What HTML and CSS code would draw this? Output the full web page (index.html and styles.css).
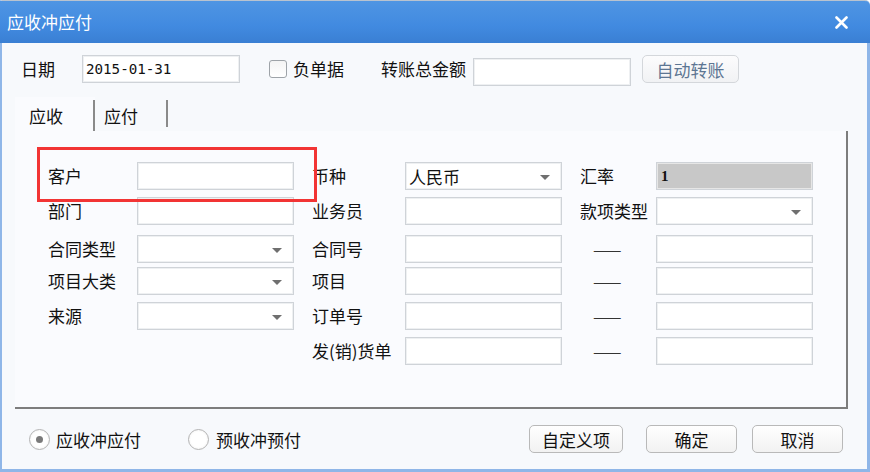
FILE: index.html
```html
<!DOCTYPE html>
<html lang="zh-CN">
<head>
    <meta charset="UTF-8">
    <title>应收冲应付</title>
    <link rel="stylesheet" href="styles.css">
</head>
<body>
    <div class="window">
        <div class="titlebar">
            <span class="title">应收冲应付</span>
            <svg class="close" width="13" height="13" viewBox="0 0 13 13">
                <path d="M1.5 1.5 L11.5 11.5 M11.5 1.5 L1.5 11.5" stroke="#fff" stroke-width="2.6" stroke-linecap="round"/>
            </svg>
        </div>

        <div class="toolbar">
            <span class="lbl date-lbl">日期</span>
            <div class="field date-field"><span class="mono">2015-01-31</span></div>
            <span class="checkbox"></span>
            <span class="lbl neg-lbl">负单据</span>
            <span class="lbl">转账总金额</span>
            <div class="field amount-field"></div>
            <button class="btn btn-disabled auto-btn">自动转账</button>
        </div>

        <div class="panel">
            <div class="tabs">
                <div class="tab tab-active">应收</div>
                <div class="tab">应付</div>
            </div>
            <div class="panel-body">
                <div class="form-grid">
                    <span class="lbl">客户</span>
                    <div class="field"></div>
                    <span class="lbl col-gap">币种</span>
                    <div class="field select"><span class="val">人民币</span></div>
                    <span class="lbl col-gap">汇率</span>
                    <div class="field readonly"><span class="val rate">1</span></div>

                    <span class="lbl">部门</span>
                    <div class="field"></div>
                    <span class="lbl col-gap">业务员</span>
                    <div class="field"></div>
                    <span class="lbl col-gap">款项类型</span>
                    <div class="field select"></div>

                    <span class="lbl">合同类型</span>
                    <div class="field select"></div>
                    <span class="lbl col-gap">合同号</span>
                    <div class="field"></div>
                    <span class="lbl dash">——</span>
                    <div class="field"></div>

                    <span class="lbl">项目大类</span>
                    <div class="field select"></div>
                    <span class="lbl col-gap">项目</span>
                    <div class="field"></div>
                    <span class="lbl dash">——</span>
                    <div class="field"></div>

                    <span class="lbl">来源</span>
                    <div class="field select"></div>
                    <span class="lbl col-gap">订单号</span>
                    <div class="field"></div>
                    <span class="lbl dash">——</span>
                    <div class="field"></div>

                    <span></span>
                    <span></span>
                    <span class="lbl col-gap">发(销)货单</span>
                    <div class="field"></div>
                    <span class="lbl dash">——</span>
                    <div class="field"></div>
                </div>
                <div class="highlight"></div>
            </div>
        </div>

        <div class="footer">
            <label class="radio-item"><span class="radio checked"></span>应收冲应付</label>
            <label class="radio-item second"><span class="radio"></span>预收冲预付</label>
            <div class="actions">
                <button class="btn custom-btn">自定义项</button>
                <button class="btn ok-btn">确定</button>
                <button class="btn">取消</button>
            </div>
        </div>
    </div>
</body>
</html>
```

FILE: styles.css
```css
* {
    margin: 0;
    padding: 0;
    box-sizing: border-box;
    font-family: "Noto Sans CJK SC", "Noto Sans", sans-serif;
}

body {
    width: 870px;
    height: 472px;
    background: #ffffff;
    overflow: hidden;
}

.window {
    width: 870px;
    height: 472px;
    display: flex;
    flex-direction: column;
    background: #f7f9fc;
    border-left: 2px solid #8fb6e8;
    border-right: 3px solid #8fb6e8;
    border-bottom: 3px solid #8fb6e8;
    border-top: 1px solid #b9c3cf;
    border-top-right-radius: 5px;
}

/* title bar */
.titlebar {
    height: 42px;
    flex: none;
    margin: 0 -3px 0 -2px;
    display: flex;
    align-items: center;
    justify-content: space-between;
    padding: 0 22px 0 7px;
    background: linear-gradient(#4f95e3, #418ae0 60%, #3a7fd3);
    border-top-right-radius: 5px;
}

.title {
    color: #fff;
    font-size: 17px;
    line-height: 1;
    margin-top: -1px;
}

.close {
    display: block;
}

/* top row */
.toolbar {
    display: flex;
    align-items: center;
    height: 28px;
    margin-top: 12px;
    padding-left: 19px;
}

.lbl {
    font-size: 17px;
    color: #111;
    line-height: 28px;
    white-space: nowrap;
}

.date-lbl {
    width: 61px;
}

.field {
    height: 28px;
    background: #fff;
    border: 1px solid #cfd3d8;
    box-shadow: inset 0 0 0 1px #eef0f2;
    position: relative;
    display: flex;
    align-items: center;
}

.date-field {
    width: 158px;
}

.mono {
    font-family: "DejaVu Sans Mono", monospace;
    font-size: 14.2px;
    color: #111;
    padding-left: 3px;
}

.checkbox {
    width: 18px;
    height: 18px;
    margin-left: 29px;
    border: 1px solid #9ea3a8;
    border-radius: 3px;
    background: linear-gradient(#f4f4f4, #ffffff);
}

.neg-lbl {
    margin-left: 6px;
    width: 88px;
}

.amount-field {
    width: 158px;
    margin-left: 7px;
    margin-top: 6px;
}

.btn {
    height: 28px;
    font-size: 17px;
    color: #111;
    background: linear-gradient(#ffffff, #f2f2f2);
    border: 1px solid #b9b9b9;
    border-radius: 5px;
    width: 91px;
    line-height: 1;
}

.btn-disabled {
    color: #5d7693;
    border-color: #d4d7db;
    background: linear-gradient(#fcfcfd, #f1f2f4);
}

.auto-btn {
    width: 97px;
    margin-left: 11px;
}

/* tabbed panel */
.panel {
    margin: 14px 19px 0 13px;
    height: 312px;
    display: flex;
    flex-direction: column;
    background: #fafbfe;
    border-bottom: 2px solid #7d7d7d;
}

.tabs {
    display: flex;
    height: 34px;
    flex: none;
    background: #f7f9fc;
}

.tab {
    font-size: 17px;
    color: #111;
    line-height: 34px;
    padding-top: 2px;
    height: 34px;
    position: relative;
}

.tab::after {
    content: "";
    position: absolute;
    right: 0;
    top: 3px;
    width: 2px;
    height: 31px;
    background: #8a8a8a;
}

.tab-active {
    width: 80px;
    padding-left: 14px;
    background: #fafbfe;
}

.tab + .tab {
    width: 73px;
    padding-left: 9px;
}

.tab + .tab::after {
    height: 27px;
}

.panel-body {
    flex: 1;
    position: relative;
    border-right: 2px solid #7d7d7d;
    padding: 31px 0 0 33px;
}

.form-grid {
    display: grid;
    grid-template-columns: 89px 157px 111px 157px 94px 157px;
    grid-template-rows: 35px 38px 32px 35px 35px 28px;
    align-items: start;
}

.form-grid .field,
.form-grid .lbl {
    height: 28px;
}

.col-gap {
    padding-left: 18px;
}

.dash {
    padding-left: 31px;
    color: #333;
    letter-spacing: 1px;
}

.select::after {
    content: "";
    position: absolute;
    right: 11px;
    top: 12px;
    border-left: 5px solid transparent;
    border-right: 5px solid transparent;
    border-top: 5px solid #6f6f6f;
}

.val {
    font-size: 17px;
    color: #111;
    padding-left: 3px;
    line-height: 1;
}

.readonly {
    background: #c8c8c8;
    box-shadow: inset 0 0 0 1px #e6e6e6;
}

.rate {
    font-family: "Liberation Serif", serif;
    font-weight: bold;
    font-size: 15px;
    padding-left: 4px;
}

.highlight {
    position: absolute;
    left: 22px;
    top: 16px;
    width: 280px;
    height: 55px;
    border: 3px solid #f23434;
    pointer-events: none;
}

/* footer */
.footer {
    flex: 1;
    display: flex;
    align-items: center;
    padding: 0 24px 0 27px;
}

.radio-item {
    display: flex;
    align-items: center;
    font-size: 17px;
    color: #111;
    gap: 6px;
}

.radio-item.second {
    margin-left: 47px;
    gap: 7px;
}

.radio {
    width: 21px;
    height: 21px;
    border-radius: 50%;
    border: 1px solid #b4b4b4;
    background: radial-gradient(circle, #ffffff 55%, #e8e8e8);
    position: relative;
}

.radio.checked::after {
    content: "";
    position: absolute;
    left: 6px;
    top: 6px;
    width: 7px;
    height: 7px;
    border-radius: 50%;
    background: #7a7a7a;
}

.actions {
    margin-left: auto;
    display: flex;
    gap: 15px;
}

.custom-btn {
    width: 94px;
    margin-right: 8px;
}
```
